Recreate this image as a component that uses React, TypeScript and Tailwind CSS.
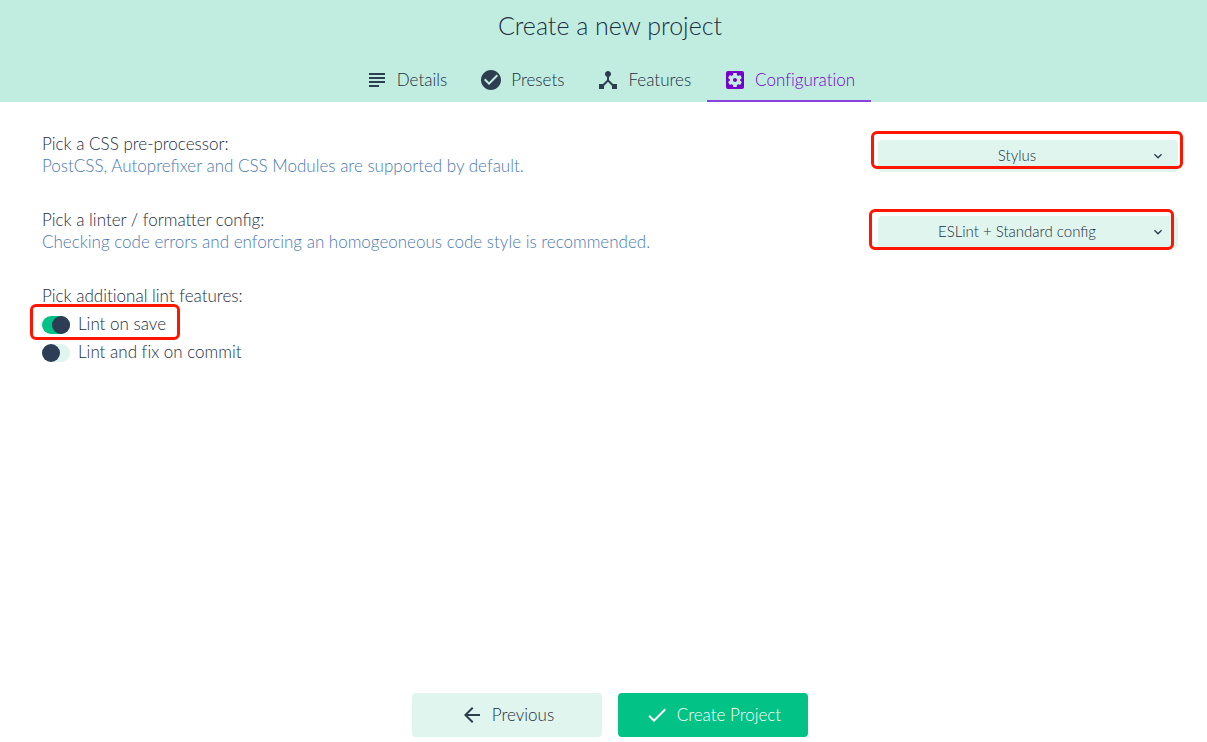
import { useState } from "react";
import type { ReactNode } from "react";
import type { IconType } from "react-icons";
import {
  MdArrowBack,
  MdCheckCircle,
  MdDeviceHub,
  MdDone,
  MdKeyboardArrowDown,
  MdSettingsApplications,
  MdSubject,
} from "react-icons/md";

const tabs: { label: string; icon: IconType }[] = [
  { label: "Details", icon: MdSubject },
  { label: "Presets", icon: MdCheckCircle },
  { label: "Features", icon: MdDeviceHub },
  { label: "Configuration", icon: MdSettingsApplications },
];

function Highlight({ className }: { className: string }) {
  return (
    <span
      aria-hidden="true"
      className={`pointer-events-none absolute rounded-md border-3 border-[#ff1500] ${className}`}
    />
  );
}

function SelectRow({
  id,
  title,
  description,
  options,
  children,
}: {
  id: string;
  title: string;
  description: string;
  options: string[];
  children: ReactNode;
}) {
  return (
    <div className="flex items-start justify-between gap-6 pb-8">
      <div>
        <label htmlFor={id} className="block">
          {title}
        </label>
        <p className="text-[#4a7ab0]">{description}</p>
      </div>
      <div className="relative mt-[7px] w-[300px] shrink-0">
        <select
          id={id}
          className="block h-8 w-full appearance-none rounded-sm bg-[#e0f5ed] pr-[22px] pb-0.5 text-center text-[15px] text-[#1c2e42] [text-align-last:center]"
        >
          {options.map((option) => (
            <option key={option}>{option}</option>
          ))}
        </select>
        <MdKeyboardArrowDown className="pointer-events-none absolute top-2 right-3 size-4 text-[#2c3e50]" />
        {children}
      </div>
    </div>
  );
}

function Switch({ label, initial, children }: { label: string; initial: boolean; children?: ReactNode }) {
  const [on, setOn] = useState(initial);
  return (
    <div className="relative flex">
      <label className="flex h-7 cursor-pointer items-center gap-2">
        <input
          type="checkbox"
          checked={on}
          onChange={() => setOn(!on)}
          className="peer sr-only"
        />
        <span className="flex h-[18px] w-7 rounded-full bg-[#e0f5ed] peer-checked:justify-end peer-checked:bg-[#03c285]">
          <span className="size-[18px] rounded-full bg-[#2c3e55]" />
        </span>
        <span className="pb-0.5">{label}</span>
      </label>
      {children}
    </div>
  );
}

export default function App() {
  const [active, setActive] = useState("Configuration");
  return (
    <div className="flex min-h-screen flex-col bg-white font-['Lato','Liberation_Sans',sans-serif] text-[17px] leading-[22px] font-light text-[#1c2e42]">
      <header className="bg-[#c1ede0] pl-[13px]">
        <h1 className="pt-[9px] text-center text-[25px] leading-8 font-light">Create a new project</h1>
        <nav className="flex justify-center pt-[15px]">
          {tabs.map(({ label, icon: Icon }) => (
            <button
              key={label}
              type="button"
              onClick={() => setActive(label)}
              className={`flex h-[46px] items-center gap-2 border-b-2 px-4 pt-[3px] [font-variant-ligatures:none] ${
                active === label ? "border-[#8844dd] text-[#7400cc]" : "border-transparent"
              }`}
            >
              <Icon className={active === label ? "size-6" : "size-6 text-[#2c3e50]"} />
              {label}
            </button>
          ))}
        </nav>
      </header>

      <main className="flex-1 pt-[31px] pr-[29px] pl-[42px]">
        <SelectRow
          id="css"
          title="Pick a CSS pre-processor:"
          description="PostCSS, Autoprefixer and CSS Modules are supported by default."
          options={["Stylus"]}
        >
          <Highlight className="-top-[9px] -right-[5px] -left-[7px] h-[38px]" />
        </SelectRow>
        <SelectRow
          id="linter"
          title="Pick a linter / formatter config:"
          description="Checking code errors and enforcing an homogeoneous code style is recommended."
          options={["ESLint + Standard config"]}
        >
          <Highlight className="-top-[7px] right-1 -left-[9px] h-[41px]" />
        </SelectRow>
        <fieldset className="[font-variant-ligatures:none]">
          <legend className="pb-1">Pick additional lint features:</legend>
          <Switch label="Lint on save" initial={true}>
            <Highlight className="-top-[7px] -left-3 h-9 w-[150px]" />
          </Switch>
          <Switch label="Lint and fix on commit" initial={false} />
        </fieldset>
      </main>

      <footer className="flex justify-center gap-4 pb-[5px] pl-[13px]">
        <button
          type="button"
          className="flex h-11 w-[190px] items-center justify-center gap-2 rounded-sm bg-[#e0f5ed]"
        >
          <MdArrowBack className="size-6 text-[#2c3e50]" />
          Previous
        </button>
        <button
          type="button"
          className="flex h-11 w-[190px] items-center justify-center gap-2 rounded-sm bg-[#03c285] text-white"
        >
          <MdDone className="size-6" />
          Create Project
        </button>
      </footer>
    </div>
  );
}
